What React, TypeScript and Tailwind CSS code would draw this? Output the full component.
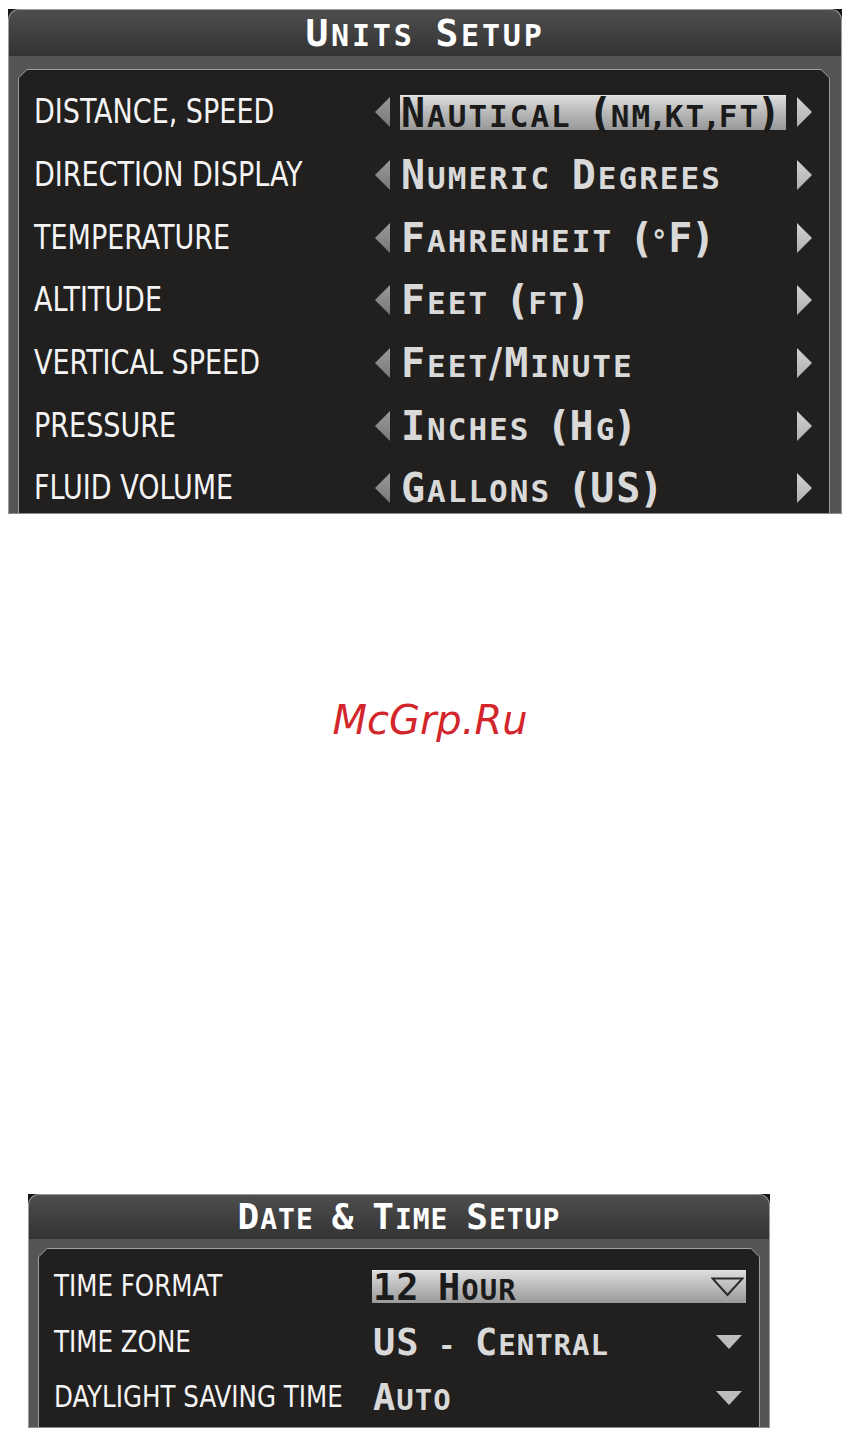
import React from 'react';

type Kind = 'big' | 'small' | 'punctBig' | 'punctSmall';
type Run = { kind: Kind; text: string };

// Capitals and digits stay full height, lowercase is set as small caps,
// brackets / commas / degree sign come from the proportional face so they sit tight
const kindOf = (ch: string): Kind => {
  if (/[()\/]/.test(ch)) return 'punctBig';
  if (/[,°]/.test(ch)) return 'punctSmall';
  if (/[A-Z0-9&]/.test(ch)) return 'big';
  return 'small';
};

const toRuns = (s: string): Run[] => {
  const runs: Run[] = [];
  for (const ch of s) {
    const kind = kindOf(ch);
    const last = runs[runs.length - 1];
    if (last && last.kind === kind) last.text += ch;
    else runs.push({ kind, text: ch });
  }
  return runs;
};

const punctFont = "font-['DejaVu_Sans_Condensed','DejaVu_Sans',sans-serif]";

interface SmallCapsProps {
  text: string;
  big: string;
  small: string;
  className?: string;
}

const SmallCaps: React.FC<SmallCapsProps> = ({ text, big, small, className = '' }) => (
  <span className={`font-['DejaVu_Sans_Mono',monospace] font-bold leading-none whitespace-pre ${className}`}>
    {toRuns(text).map((r, i) => {
      if (r.kind === 'big') return <span key={i} className={big}>{r.text}</span>;
      if (r.kind === 'punctBig') return <span key={i} className={`${big} ${punctFont}`}>{r.text}</span>;
      if (r.kind === 'punctSmall') return <span key={i} className={`${small} ${punctFont}`}>{r.text}</span>;
      return <span key={i} className={small}>{r.text.toUpperCase()}</span>;
    })}
  </span>
);

const LeftArrow = () => (
  <svg width="18" height="32" viewBox="0 0 18 32" className="shrink-0">
    <defs>
      <linearGradient id="la" x1="0" y1="0" x2="0" y2="1">
        <stop offset="0" stopColor="#9a9a9a" />
        <stop offset="1" stopColor="#787878" />
      </linearGradient>
    </defs>
    <polygon points="17,1 17,31 2,16" fill="url(#la)" />
  </svg>
);

const RightArrow = () => (
  <svg width="18" height="32" viewBox="0 0 18 32" className="shrink-0">
    <defs>
      <linearGradient id="ra" x1="0" y1="0" x2="0" y2="1">
        <stop offset="0" stopColor="#d2d2d2" />
        <stop offset="1" stopColor="#b0b0b0" />
      </linearGradient>
    </defs>
    <polygon points="1,1 16,16 1,31" fill="url(#ra)" />
  </svg>
);

const DropDown = () => (
  <svg width="26" height="14" viewBox="0 0 26 14" className="shrink-0">
    <polygon points="0,0 26,0 13,14" fill="#bdbdbd" />
  </svg>
);

const DropDownOpen = () => (
  <svg width="33" height="20" viewBox="0 0 33 20" className="shrink-0">
    <polygon points="1.5,1.5 31.5,1.5 16.5,18" fill="none" stroke="#2a2a2a" strokeWidth="2" />
  </svg>
);

interface FrameProps {
  title: string;
  titleBig: string;
  titleSmall: string;
  titleTrack: string;
  width: string;
  barH: string;
  bandH: string;
  innerH: string;
  padX: string;
  children: React.ReactNode;
}

// Grey bezel with a title strip and a chamfered dark page inside
const Frame: React.FC<FrameProps> = ({
  title, titleBig, titleSmall, titleTrack, width, barH, bandH, innerH, padX, children,
}) => (
  <div className={`${width} bg-[#161616]`}>
    <div className="rounded-t-[11px] border border-b-0 border-[#9c9c9c] bg-[#555555] overflow-hidden">
      <div className={`${barH} flex items-center justify-center bg-gradient-to-b from-[#4e4e4e] to-[#333333] text-white`}>
        <SmallCaps text={title} big={titleBig} small={titleSmall} className={titleTrack} />
      </div>
      <div className={`${bandH} ${padX}`}>
        <div className="bg-[#9e9e9e] px-[1px] pt-[1px] [clip-path:polygon(9px_0,calc(100%_-_9px)_0,100%_9px,100%_100%,0_100%,0_9px)]">
          <div className={`${innerH} overflow-hidden bg-[#221f1f] [clip-path:polygon(8px_0,calc(100%_-_8px)_0,100%_8px,100%_100%,0_100%,0_8px)]`}>
            {children}
          </div>
        </div>
      </div>
    </div>
    <div className="h-px bg-[#8a8a8a]" />
  </div>
);

const units = [
  { label: 'DISTANCE, SPEED', value: 'Nautical (nm,kt,ft)', selected: true },
  { label: 'DIRECTION DISPLAY', value: 'Numeric Degrees' },
  { label: 'TEMPERATURE', value: 'Fahrenheit (°F)' },
  { label: 'ALTITUDE', value: 'Feet (ft)' },
  { label: 'VERTICAL SPEED', value: 'Feet/Minute' },
  { label: 'PRESSURE', value: 'Inches (Hg)' },
  { label: 'FLUID VOLUME', value: 'Gallons (US)' },
];

const dateTime = [
  { label: 'TIME FORMAT', value: '12 Hour', selected: true },
  { label: 'TIME ZONE', value: 'US - Central' },
  { label: 'DAYLIGHT SAVING TIME', value: 'Auto' },
];

const labelFont = "font-['DejaVu_Sans_Condensed','DejaVu_Sans',sans-serif]";

export default function App() {
  return (
    <div className="w-[848px] h-[1436px] bg-white overflow-hidden">
      {/* Units setup page */}
      <div className="pt-[9px] pl-[8px]">
        <Frame
          title="Units Setup"
          titleBig="text-[38px]"
          titleSmall="text-[30px]"
          titleTrack="tracking-[2.8px]"
          width="w-[834px]"
          barH="h-[46px]"
          bandH="pt-[13px]"
          innerH="h-[443px]"
          padX="pl-[9px] pr-[11px]"
        >
          <div className="pt-[11px] pl-[15px] pr-[16px]">
            {units.map((row) => (
              <div key={row.label} className="h-[62.7px] flex items-center">
                <div className="w-[339px] shrink-0">
                  <span className={`inline-block origin-left scale-x-[0.91] whitespace-nowrap text-[33px] leading-none text-[#f4f4f4] ${labelFont}`}>
                    {row.label}
                  </span>
                </div>
                <LeftArrow />
                <div
                  className={`ml-[9px] w-[386px] h-[35px] shrink-0 flex items-center pl-[1px] ${
                    row.selected
                      ? 'bg-gradient-to-b from-[#dcdcdc] via-[#b8b8b8] to-[#989898] border-t border-[#e6e6e6] text-[#1b1b1b]'
                      : 'text-[#d9d9d9]'
                  }`}
                >
                  <SmallCaps text={row.value} big="text-[40px]" small="text-[31px]" className="tracking-[2px]" />
                </div>
                <div className="ml-[10px]">
                  <RightArrow />
                </div>
              </div>
            ))}
          </div>
        </Frame>
      </div>

      {/* Watermark */}
      <div className="h-[680px] pt-[186px] pl-[12px] flex justify-center">
        <span className="font-['DejaVu_Sans',sans-serif] italic text-[40px] leading-none text-[#d3262c]">
          McGrp.Ru
        </span>
      </div>

      {/* Date and time setup page */}
      <div className="pl-[28px]">
        <Frame
          title="Date & Time Setup"
          titleBig="text-[36px]"
          titleSmall="text-[28px]"
          titleTrack="tracking-[1px]"
          width="w-[742px]"
          barH="h-[44px]"
          bandH="pt-[9px]"
          innerH="h-[178px]"
          padX="pl-[9px] pr-[9px]"
        >
          <div className="pt-[10px] pl-[15px] pr-[13px]">
            {dateTime.map((row) => (
              <div key={row.label} className="h-[55.5px] flex items-center">
                <div className="w-[318px] shrink-0">
                  <span className={`inline-block origin-left scale-x-[0.91] whitespace-nowrap text-[30px] leading-none text-[#f4f4f4] ${labelFont}`}>
                    {row.label}
                  </span>
                </div>
                <div
                  className={`w-[374px] h-[33px] shrink-0 flex items-center justify-between pl-[1px] ${
                    row.selected
                      ? 'bg-gradient-to-b from-[#dcdcdc] via-[#bababa] to-[#9a9a9a] border-t border-[#e6e6e6] text-[#1b1b1b] pr-[2px]'
                      : 'text-[#d9d9d9] pr-[4px]'
                  }`}
                >
                  <SmallCaps text={row.value} big="text-[37px]" small="text-[29px]" className="tracking-[1px]" />
                  {row.selected ? <DropDownOpen /> : <DropDown />}
                </div>
              </div>
            ))}
          </div>
        </Frame>
      </div>
    </div>
  );
}
